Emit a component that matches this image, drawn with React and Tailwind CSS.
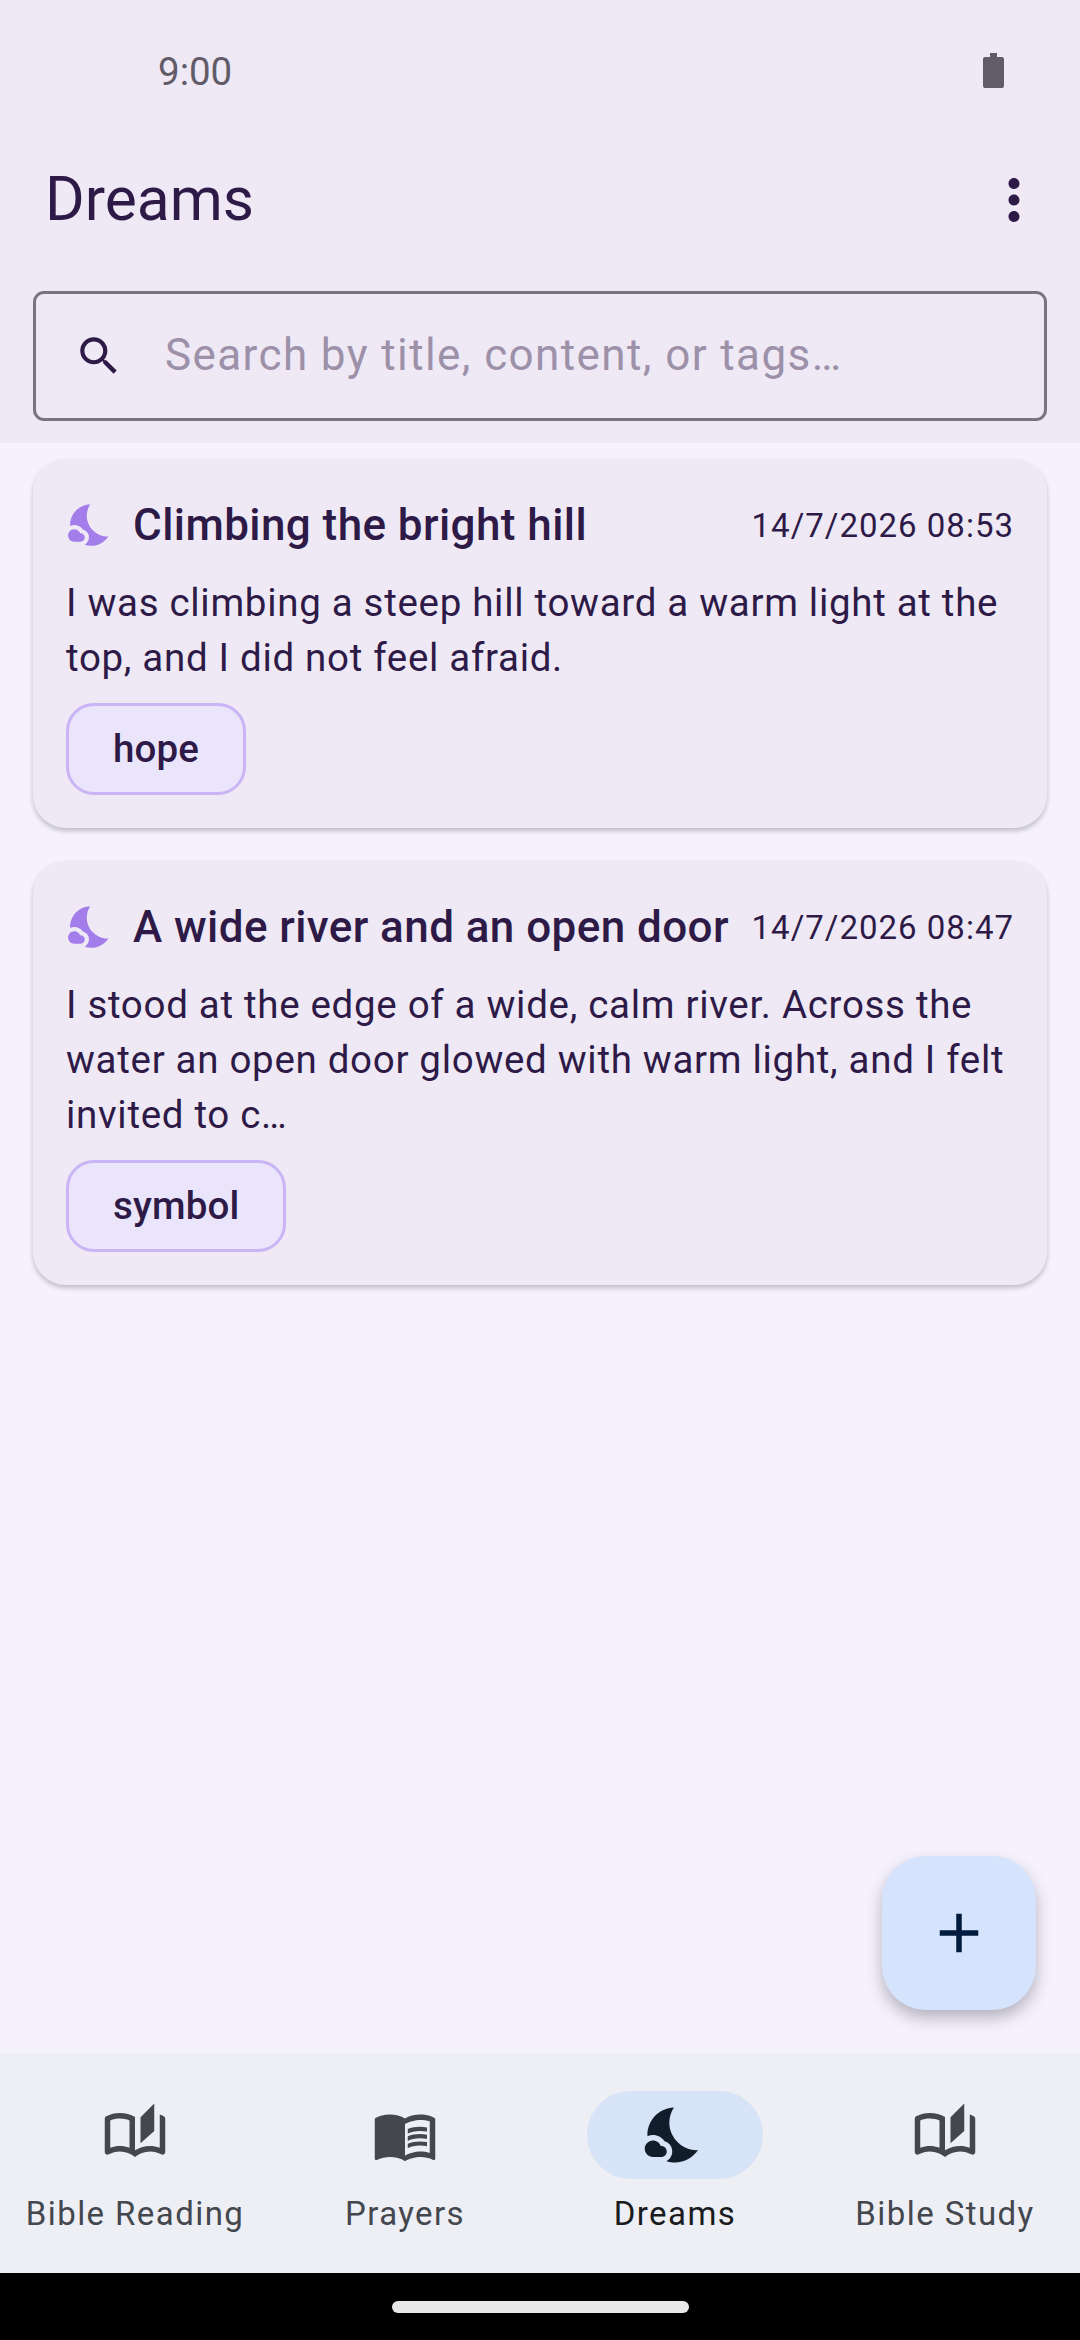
import React from 'react';
import { MdAdd, MdMenuBook, MdMoreVert, MdNightsStay, MdOutlineAutoStories, MdSearch } from 'react-icons/md';

const dreams = [
  {
    title: 'Climbing the bright hill',
    date: '14/7/2026 08:53',
    body: 'I was climbing a steep hill toward a warm light at the top, and I did not feel afraid.',
    tag: 'hope',
  },
  {
    title: 'A wide river and an open door',
    date: '14/7/2026 08:47',
    body: 'I stood at the edge of a wide, calm river. Across the water an open door glowed with warm light, and I felt invited to c…',
    tag: 'symbol',
  },
];

const tabs = [
  { label: 'Bible Reading', Icon: MdOutlineAutoStories },
  { label: 'Prayers', Icon: MdMenuBook },
  { label: 'Dreams', Icon: MdNightsStay, active: true },
  { label: 'Bible Study', Icon: MdOutlineAutoStories },
];

const DreamCard = ({ dream }) => (
  <div className="rounded-[33px] bg-[#efe9f6] p-[33px] shadow-[0_3px_5px_rgba(0,0,0,0.22)]">
    <div className="flex h-[66px] items-center justify-between">
      <div className="flex items-center gap-[17px]">
        <MdNightsStay size={50} className="text-[#a37eea]" />
        <span className="text-[44px] leading-[66px] font-[460] tracking-[0.42px] whitespace-nowrap">{dream.title}</span>
      </div>
      <span className="pt-[2px] text-[33px] tracking-[1px] whitespace-nowrap">{dream.date}</span>
    </div>
    <p className="mt-[17px] text-[38.5px] leading-[55px] tracking-[0.69px]">{dream.body}</p>
    <div className="mt-[18px] flex">
      <span className="flex h-[92px] items-center rounded-[28px] border-[3px] border-[#c9b5f6] bg-[#ebe5fc] px-[44px] text-[38.5px] font-[460] tracking-[0.15px]">
        {dream.tag}
      </span>
    </div>
  </div>
);

const App = () => (
  <div className="relative flex h-[2340px] w-[1080px] flex-col overflow-hidden bg-[#f5f2fd] font-[Roboto,sans-serif] text-[#2e1a47]">
    <header className="bg-[#efe9f6] px-[33px] pb-[22px]">
      <div className="flex h-[112px] items-center justify-between pt-[32px] pl-[125px] pr-[11px]">
        <span className="text-[38.5px] text-[#625b68]">9:00</span>
        <svg width="21" height="35" viewBox="0 0 21 35" className="mr-[32px] mb-[3px]">
          <path d="M7 0h7v4h5a2 2 0 0 1 2 2v27a2 2 0 0 1-2 2H2a2 2 0 0 1-2-2V6a2 2 0 0 1 2-2h5z" fill="#625b68" />
        </svg>
      </div>
      <div className="flex h-[176px] items-center justify-between pl-[12px]">
        <h1 className="text-[60.5px] font-normal">Dreams</h1>
        <MdMoreVert size={66} />
      </div>
      <div className="mt-[3px] flex h-[130px] items-center rounded-[11px] border-[3px] border-[#79747e] pl-[38px]">
        <MdSearch size={50} className="mr-[41px]" />
        <span className="mb-[2px] text-[44px] tracking-[1.4px] text-[#9c91a8]">Search by title, content, or tags…</span>
      </div>
    </header>

    <main className="flex flex-1 flex-col gap-[33px] px-[33px] pt-[16px]">
      {dreams.map((dream) => (
        <DreamCard key={dream.title} dream={dream} />
      ))}
    </main>

    <button className="absolute top-[1856px] right-[44px] flex h-[154px] w-[154px] items-center justify-center rounded-[44px] bg-[#d5e3fc] text-[#001b3d] shadow-[0_8px_16px_rgba(40,30,50,0.3)]">
      <MdAdd size={66} />
    </button>

    <nav className="grid h-[220px] grid-cols-4 bg-[#edeff5]">
      {tabs.map(({ label, Icon, active }) => (
        <div key={label} className="flex flex-col items-center pt-[38px]">
          <div className={`flex h-[88px] w-[176px] items-center justify-center rounded-full ${active ? 'bg-[#d7e3f7]' : ''}`}>
            <Icon size={66} className={active ? 'text-[#111d2b]' : 'text-[#44474e]'} />
          </div>
          <span className={`mt-[13px] text-[33px] leading-[44px] font-[450] tracking-[1.42px] whitespace-nowrap ${active ? 'text-[#1a1c20]' : 'text-[#44474e]'}`}>
            {label}
          </span>
        </div>
      ))}
    </nav>

    <div className="flex h-[67px] justify-center bg-black pt-[28px]">
      <div className="h-[12px] w-[297px] rounded-full bg-[#e8e8e8]" />
    </div>
  </div>
);

export default App;
